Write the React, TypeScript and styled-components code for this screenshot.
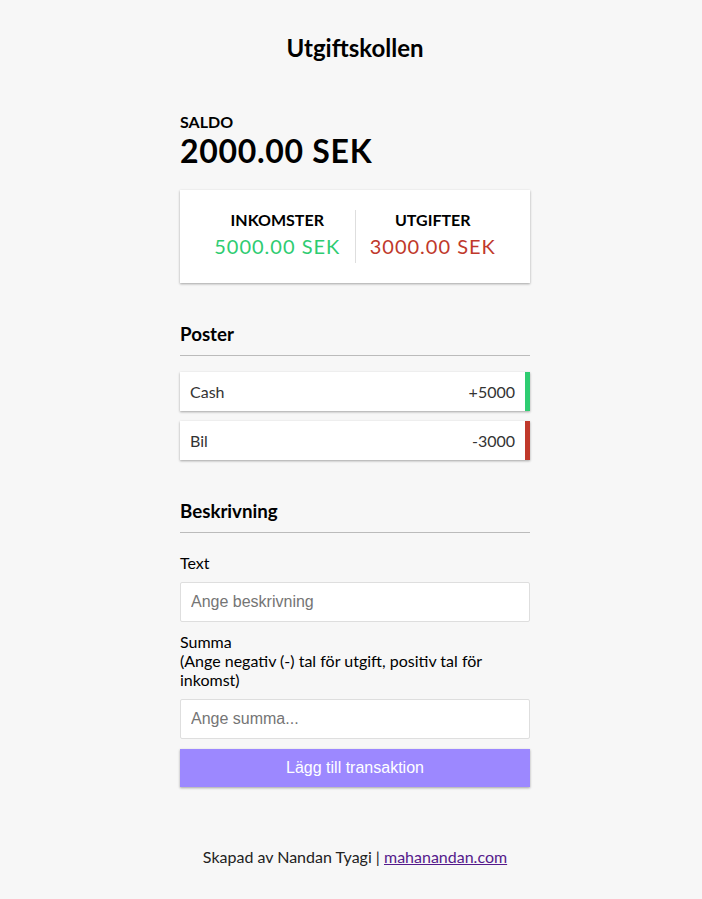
import styled, { createGlobalStyle } from 'styled-components';

const COLORS = {
  page: '#f7f7f7',
  plus: '#2ecc71',
  minus: '#c0392b',
  accent: '#9c88ff',
  line: '#bbb',
  border: '#dedede',
};

const SHADOW = '0 1px 3px rgba(0, 0, 0, 0.12), 0 1px 2px rgba(0, 0, 0, 0.24)';

const GlobalStyle = createGlobalStyle`
  * {
    box-sizing: border-box;
  }

  body {
    margin: 0;
    background-color: ${COLORS.page};
    font-family: Lato, 'Open Sans', sans-serif;
    color: #000;
  }
`;

interface Transaction {
  id: number;
  text: string;
  amount: number;
}

const transactions: Transaction[] = [
  { id: 1, text: 'Cash', amount: 5000 },
  { id: 2, text: 'Bil', amount: -3000 },
];

export default function App(): JSX.Element {
  const income = transactions.filter((t) => t.amount > 0).reduce((s, t) => s + t.amount, 0);
  const expense = transactions.filter((t) => t.amount < 0).reduce((s, t) => s - t.amount, 0);
  const balance = income - expense;

  return (
    <Page>
      <GlobalStyle />
      <Title>Utgiftskollen</Title>
      <Container>
        <SmallHeading>Saldo</SmallHeading>
        <Balance>{balance.toFixed(2)} SEK</Balance>

        <IncExpCard>
          <IncExpColumn>
            <SmallHeading>Inkomster</SmallHeading>
            <Money $type="plus">{income.toFixed(2)} SEK</Money>
          </IncExpColumn>
          <IncExpColumn>
            <SmallHeading>Utgifter</SmallHeading>
            <Money $type="minus">{expense.toFixed(2)} SEK</Money>
          </IncExpColumn>
        </IncExpCard>

        <SectionHeading>Poster</SectionHeading>
        <List>
          {transactions.map((t) => (
            <ListItem key={t.id} $type={t.amount < 0 ? 'minus' : 'plus'}>
              {t.text}
              <span>
                {t.amount < 0 ? '-' : '+'}
                {Math.abs(t.amount)}
              </span>
            </ListItem>
          ))}
        </List>

        <SectionHeading>Beskrivning</SectionHeading>
        <form onSubmit={(e) => e.preventDefault()}>
          <FormControl>
            <Label htmlFor="text">Text</Label>
            <Input type="text" id="text" placeholder="Ange beskrivning" />
          </FormControl>
          <FormControl>
            <Label htmlFor="amount">
              Summa
              <br />
              (Ange negativ (-) tal för utgift, positiv tal för inkomst)
            </Label>
            <Input type="number" id="amount" placeholder="Ange summa..." />
          </FormControl>
          <Button type="submit">Lägg till transaktion</Button>
        </form>
      </Container>
      <Footer>
        Skapad av Nandan Tyagi | <FooterLink href="#">mahanandan.com</FooterLink>
      </Footer>
    </Page>
  );
}

const Page = styled.div`
  display: flex;
  flex-direction: column;
  align-items: center;
  padding: 34px 0 33px 8px;
`;

const Title = styled.h2`
  margin: 0;
  font-size: 24px;
  font-weight: 700;
  line-height: 28.8px;
`;

const Container = styled.div`
  width: 350px;
  margin-top: 49.7px;
`;

const SmallHeading = styled.h4`
  margin: 0;
  font-size: 16px;
  font-weight: 700;
  line-height: 19.2px;
  text-transform: uppercase;
`;

const Balance = styled.h1`
  margin: 0;
  font-size: 32px;
  font-weight: 700;
  line-height: 38.4px;
  letter-spacing: 0.7px;
`;

const IncExpCard = styled.div`
  display: flex;
  justify-content: space-between;
  margin: 20px 0;
  padding: 20px;
  background-color: #fff;
  box-shadow: ${SHADOW};
`;

const IncExpColumn = styled.div`
  flex: 1;
  text-align: center;

  &:first-of-type {
    border-right: 1px solid ${COLORS.border};
  }
`;

const Money = styled.p<{ $type: 'plus' | 'minus' }>`
  margin: 5px 0;
  font-size: 20px;
  line-height: 24px;
  letter-spacing: 1px;
  color: ${({ $type }) => ($type === 'plus' ? COLORS.plus : COLORS.minus)};
`;

const SectionHeading = styled.h3`
  margin: 40px 0 10px;
  padding-bottom: 10px;
  border-bottom: 1px solid ${COLORS.line};
  font-size: 18.72px;
  font-weight: 700;
  line-height: 22px;
`;

const List = styled.ul`
  list-style-type: none;
  padding: 0;
  margin: 16px 0 40px;
`;

const ListItem = styled.li<{ $type: 'plus' | 'minus' }>`
  display: flex;
  justify-content: space-between;
  margin: 10px 0;
  padding: 10px;
  background-color: #fff;
  color: #333;
  font-size: 16px;
  line-height: 19px;
  box-shadow: ${SHADOW};
  border-right: 5px solid ${({ $type }) => ($type === 'plus' ? COLORS.plus : COLORS.minus)};
`;

const FormControl = styled.div`
  font-size: 16px;
  line-height: 19px;
`;

const Label = styled.label`
  display: inline-block;
  margin: 10px 0;
`;

const Input = styled.input`
  display: block;
  width: 100%;
  height: 40px;
  padding: 10px;
  border: 1px solid ${COLORS.border};
  border-radius: 2px;
  font-family: Arial, 'Liberation Sans', sans-serif;
  font-size: 16px;
  line-height: normal;
  background: #fff;
  outline: none;

  &::placeholder {
    color: #757575;
  }

  &::-webkit-inner-spin-button,
  &::-webkit-outer-spin-button {
    -webkit-appearance: none;
    margin: 0;
  }
`;

const Button = styled.button`
  display: block;
  width: 100%;
  height: 38px;
  margin: 10px 0 30px;
  padding: 0 10px;
  border: 0;
  background-color: ${COLORS.accent};
  color: #fff;
  font-family: Arial, 'Liberation Sans', sans-serif;
  font-size: 16px;
  line-height: normal;
  box-shadow: ${SHADOW};
  cursor: pointer;
`;

const Footer = styled.footer`
  margin-top: 30px;
  font-size: 16px;
  line-height: 19.2px;
  color: #222;
  text-align: center;
`;

const FooterLink = styled.a`
  color: #551a8b;
`;
